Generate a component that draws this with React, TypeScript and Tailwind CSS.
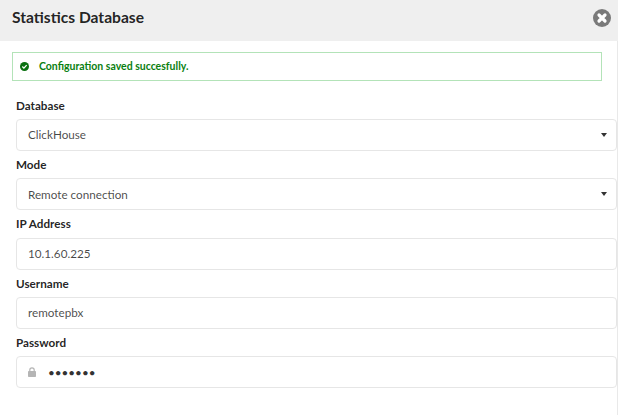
import React from "react";

const Caret = () => (
  <span className="ml-auto mr-[6px] w-0 h-0 border-x-[3px] border-x-transparent border-t-[4px] border-t-[#333]" />
);

function Field({ label, children }: { label: string; children: React.ReactNode }) {
  return (
    <div className="flex flex-col">
      <label className="h-[27.33px] pt-[3px] text-[11.7px] leading-[20px] font-bold text-[rgba(0,0,0,0.87)]">{label}</label>
      <div className="h-[32px] flex items-center pl-[11px] pr-[3px] rounded-[4px] border border-[#e6e6e6] bg-white text-[11.7px] text-[rgba(0,0,0,0.72)]">
        {children}
      </div>
    </div>
  );
}

export default function App() {
  return (
    <div className="w-[618px] h-[415px] overflow-hidden bg-white font-['Lato','Liberation_Sans',sans-serif]">
      <div className="h-[41px] bg-[#efefef] flex items-center pl-[12px] pr-[7px] justify-between">
        <h1 className="text-[15.6px] font-bold text-[rgba(0,0,0,0.87)] leading-[36px] mb-[7px]">Statistics Database</h1>
        <svg width="18" height="18" viewBox="0 0 18 18" className="mb-[6px]">
          <circle cx="9" cy="9" r="9" fill="#7a7a7a" />
          <path d="M6 6 L12 12 M12 6 L6 12" stroke="#fff" strokeWidth="3.2" strokeLinecap="round" />
        </svg>
      </div>
      <div className="border-r border-[#e9e9e9] pt-[11px] h-[374px]">
        <div className="ml-[12px] w-[590px] h-[29px] border border-[#b3e3b8] flex items-center pl-[7px] gap-[10px] text-[10.5px] font-bold text-[#0a8010]">
          <svg width="9" height="9" viewBox="0 0 10 10">
            <circle cx="5" cy="5" r="5" fill="#0a7010" />
            <path d="M2.6 5.1 L4.3 6.8 L7.4 3.5" fill="none" stroke="#fff" strokeWidth="1.5" />
          </svg>
          <span>Configuration saved succesfully.</span>
        </div>
        <div className="ml-[16px] mt-[10.7px] flex flex-col">
          <Field label="Database"><span>ClickHouse</span><Caret /></Field>
          <Field label="Mode"><span>Remote connection</span><Caret /></Field>
          <Field label="IP Address"><span>10.1.60.225</span></Field>
          <Field label="Username"><span>remotepbx</span></Field>
          <Field label="Password">
            <svg width="8" height="10" viewBox="0 0 8 10" className="mb-[1px]">
              <rect x="0" y="4" width="8" height="6" rx="0.8" fill="#b5b5b5" />
              <path d="M1.8 4.5 V3 A2.2 2.2 0 0 1 6.2 3 V4.5" fill="none" stroke="#b5b5b5" strokeWidth="1.2" />
            </svg>
            <span className="ml-[12px] text-[#333] text-[11.7px]">•••••••</span>
          </Field>
        </div>
      </div>
    </div>
  );
}
